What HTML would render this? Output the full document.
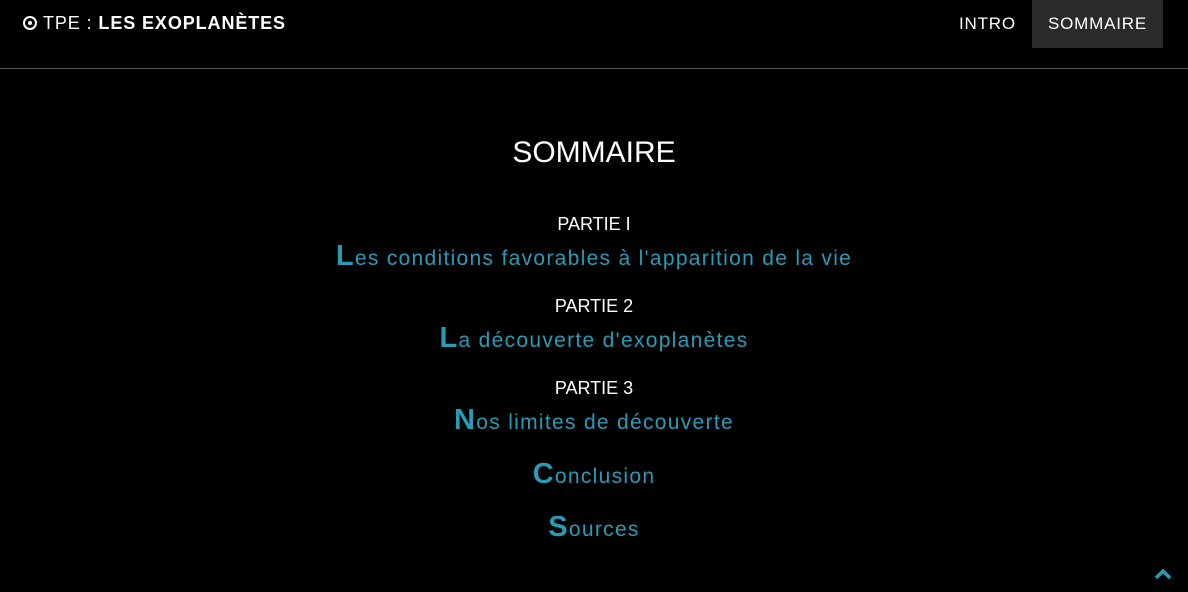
<!DOCTYPE html>
<html><head><meta charset="utf-8"><style>
body{margin:0;width:1188px;height:592px;background:#000;color:#fff;font-family:"Liberation Sans",sans-serif;position:relative;overflow:hidden}
.hdr{position:absolute;left:0;top:0;width:1188px;height:68px;border-bottom:1px solid #555}
.logo{position:absolute;left:23px;top:13px;font-size:18px;letter-spacing:0.9px;line-height:20px}
.logo b{font-weight:bold}
.dot{display:inline-block;width:10px;height:10px;border:2px solid #fff;border-radius:50%;position:relative;top:1px;margin-right:6px}
.dot:after{content:"";position:absolute;left:3px;top:3px;width:4px;height:4px;background:#fff;border-radius:50%}
.nav{position:absolute;top:0;font-size:17px;height:48px;line-height:48px;letter-spacing:.8px}
.c{position:absolute;left:0;width:1188px;text-align:center}
.p{font-size:18px}
.t{color:#2a9bb5;font-size:21px;letter-spacing:1.3px}
.t b{font-size:29px}
</style></head><body>
<div class="hdr">
<div class="logo"><span class="dot"></span>TPE : <b>LES EXOPLANÈTES</b></div>
<div class="nav" style="left:959px">INTRO</div>
<div class="nav" style="left:1032px;width:131px;background:#2a2a2a;text-align:center">SOMMAIRE</div>
</div>
<div class="c" style="top:136px;font-size:30px">SOMMAIRE</div>
<div class="c p" style="top:214px">PARTIE I</div>
<div class="c t" style="top:240px"><b>L</b>es conditions favorables à l'apparition de la vie</div>
<div class="c p" style="top:296px">PARTIE 2</div>
<div class="c t" style="top:322px"><b>L</b>a découverte d'exoplanètes</div>
<div class="c p" style="top:378px">PARTIE 3</div>
<div class="c t" style="top:404px"><b>N</b>os limites de découverte</div>
<div class="c t" style="top:458px"><b>C</b>onclusion</div>
<div class="c t" style="top:511px"><b>S</b>ources</div>
<svg style="position:absolute;left:1154px;top:568px" width="18" height="12"><path d="M2 10L9 3L16 10" stroke="#2a9bb5" stroke-width="3.5" fill="none"/></svg>
</body></html>
